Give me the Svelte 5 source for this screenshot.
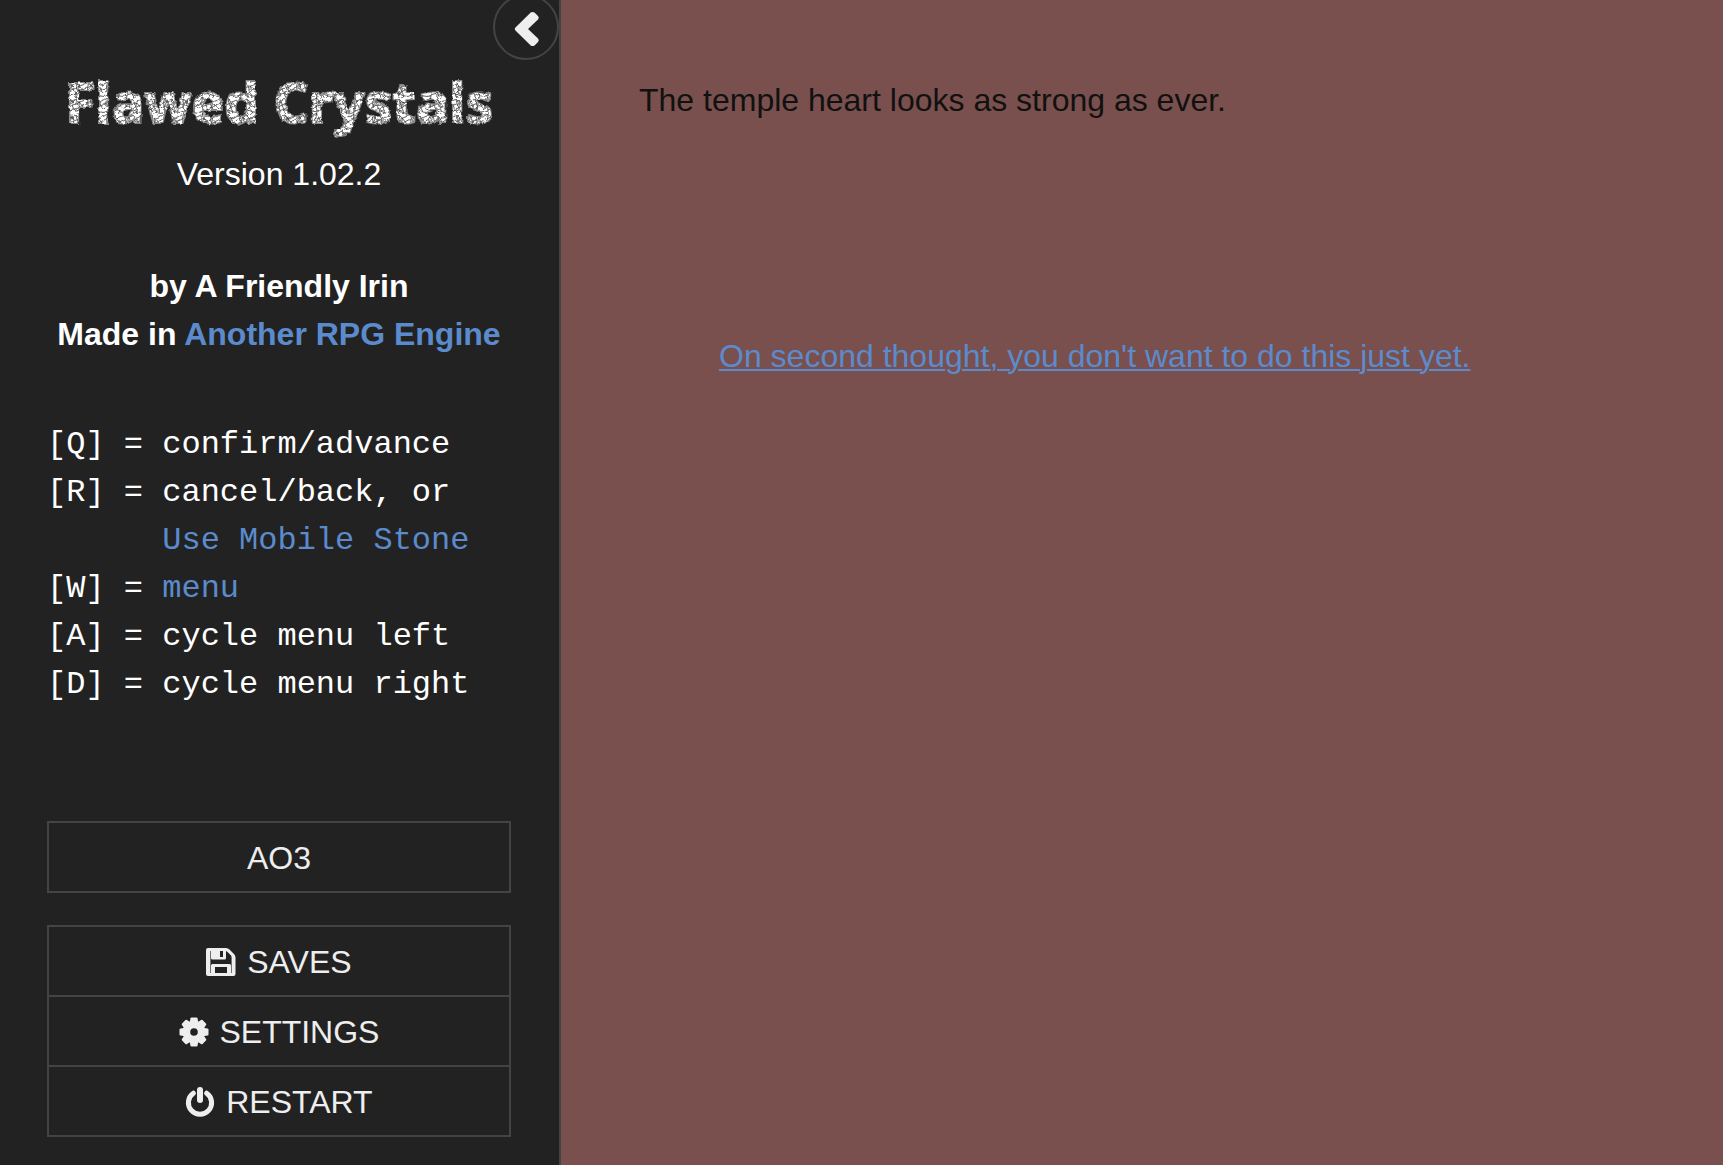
<script>
	const keys = [
		{ key: "Q", text: "confirm/advance" },
		{ key: "R", text: "cancel/back, or", extra: "Use Mobile Stone" },
		{ key: "W", link: "menu" },
		{ key: "A", text: "cycle menu left" },
		{ key: "D", text: "cycle menu right" },
	];

	const core = ["saves", "settings", "restart"];

	let stowed = $state(false);
</script>

<div class="page">
	<aside class="ui-bar" class:stowed>
		<button class="toggle" aria-label="Toggle the UI bar" onclick={() => (stowed = !stowed)}>
			<svg viewBox="0 0 26 36" width="26" height="36">
				<path d="M20.500 1.600 24 5Q25.600 6.700 24 8.400L14 18 24 27.600Q25.600 29.300 24 31L20.500 34.400Q18.500 35.800 16.700 34.400L1.200 19.200Q.200 18 1.200 16.800L16.700 1.600Q18.500.200 20.500 1.600Z" />
			</svg>
		</button>

		<header>
			<h1>Flawed Crystals</h1>
			<p class="version">Version 1.02.2</p>
			<p class="author">
				by A Friendly Irin<br />
				Made in <a href="#engine">Another RPG Engine</a>
			</p>
		</header>

		<div class="keys">
			{#each keys as k}
				<div class="key-row">
					<span>[{k.key}] =</span>
					<span>{#if k.link}<a href="#menu">{k.link}</a>{:else}{k.text}{/if}{#if k.extra}<br /><a href="#stone">{k.extra}</a>{/if}</span>
				</div>
			{/each}
		</div>

		<nav>
			<ul>
				<li><a href="#ao3">AO3</a></li>
			</ul>
			<ul>
				{#each core as item}
					<li>
						<button>
							<svg class="icon" viewBox="0 0 30 30" width="30" height="30" aria-hidden="true">
								{#if item == "saves"}
									<path fill-rule="evenodd" d="M2 1H20Q22 1 23.500 2.500L28 7Q29.500 8.500 29.500 10.500V27Q29.500 29 27.500 29H2Q0 29 0 27V3Q0 1 2 1ZM4.400 4V26H5V18.500Q5 17 6.500 17H23.500Q25 17 25 18.500V26H25.600V10.500Q25.600 9.500 25 8.500L21.500 5Q21 4.500 20 4V11Q20 12.500 18.500 12.500H6.500Q5 12.500 5 11V4ZM14 4V10H17V4ZM9 20V26H21V20Z" />
								{:else if item == "settings"}
									<g transform="translate(15 15)">
										<path fill-rule="evenodd" d="M0-11.200A11.200 11.200 0 1 1 0 11.200A11.200 11.200 0 1 1 0-11.200ZM0-3.800A3.800 3.800 0 1 0 0 3.800A3.800 3.800 0 1 0 0-3.800Z" />
										{#each [0, 45, 90, 135, 180, 225, 270, 315] as angle}
											<path d="M-4.300-9 -3.600-13.500Q-3.400-14.500-2.400-14.500H2.400Q3.400-14.500 3.600-13.500L4.300-9Z" transform="rotate({angle})" />
										{/each}
									</g>
								{:else}
									<path class="ring" d="M8.300 6.200A11.600 11.600 0 1 0 21.700 6.200" />
									<path class="bar" d="M15 3V13" />
								{/if}
							</svg>
							{item}
						</button>
					</li>
				{/each}
			</ul>
		</nav>
	</aside>

	<main>
		<p>The temple heart looks as strong as ever.</p>
		<blockquote>
			<a href="#back">On second thought, you don't want to do this just yet.</a>
		</blockquote>
	</main>
</div>

<!-- chips the edges of the title letters -->
<svg class="defs" width="0" height="0" aria-hidden="true">
	<filter id="chipped">
		<feMorphology in="SourceAlpha" operator="dilate" radius="1" result="fat" />
		<feFlood flood-color="#888" />
		<feComposite in2="fat" operator="in" result="edge" />
		<feMerge result="letters">
			<feMergeNode in="edge" />
			<feMergeNode in="SourceGraphic" />
		</feMerge>
		<feTurbulence type="fractalNoise" baseFrequency="0.2" numOctaves="2" seed="4" result="noise" />
		<feDisplacementMap in="letters" in2="noise" scale="4" xChannelSelector="R" yChannelSelector="G" />
	</filter>
</svg>

<style>
	:global(body) {
		margin: 0;
		background: #79504d;
	}
	.page {
		display: flex;
		min-height: 100vh;
		font-family: "Liberation Sans", Arial, sans-serif;
		font-size: 32px;
		line-height: 48px;
		color: #fff;
	}
	.ui-bar {
		position: relative;
		box-sizing: border-box;
		flex: none;
		width: 561px;
		padding: 66px 48px 28px 47px;
		background: #222;
		border-right: 2px solid #444;
		overflow: hidden;
	}
	.ui-bar.stowed {
		margin-left: -490px;
	}
	a {
		color: #5b8bcd;
		text-decoration: none;
	}
	.toggle {
		position: absolute;
		top: -6px;
		right: 0;
		display: flex;
		align-items: center;
		justify-content: center;
		width: 66px;
		height: 66px;
		padding: 3px 0 0 2px;
		background: #222;
		border: 2px solid #444;
		border-radius: 50%;
		cursor: pointer;
	}
	svg {
		fill: #eee;
	}
	header {
		text-align: center;
	}
	h1 {
		margin: 0;
		font-family: "Noto Sans", "Open Sans", sans-serif;
		font-size: 55px;
		font-weight: bold;
		line-height: 72px;
		white-space: nowrap;
		color: transparent;
		background: #fff url("data:image/svg+xml,%3Csvg xmlns='http://www.w3.org/2000/svg' width='19' height='16' viewBox='0 0 37 31' preserveAspectRatio='none'%3E%3Cpath d='M0 4 7 0 12 6 19 2 26 8 37 4M0 12 5 9 12 6 14 14 22 11 26 8 31 15 37 12M0 21 6 17 14 14 17 22 25 19 31 15 37 21M0 28 8 25 17 22 22 31M25 19 29 27 37 28M7 0 5 9 6 17 8 25 7 31M19 2 22 11 25 19M29 27 26 31M12 6 6 17M26 8 25 19M17 22 29 27' fill='none' stroke='%23333' stroke-width='1.500'/%3E%3C/svg%3E");
		background-clip: text;
		-webkit-background-clip: text;
		filter: url(#chipped);
	}
	p {
		margin: 0;
	}
	.version {
		margin-top: 12px;
	}
	.author {
		margin-top: 64px;
		font-weight: bold;
		white-space: nowrap;
	}
	.keys {
		margin-top: 63px;
		font-family: "Liberation Mono", "Courier New", monospace;
		white-space: nowrap;
	}
	.key-row {
		display: flex;
		gap: 1ch;
	}
	nav {
		margin-top: 112px;
	}
	ul {
		margin: 0 0 32px;
		padding: 0;
		list-style: none;
		border: 2px solid #444;
	}
	ul:last-child {
		margin-bottom: 0;
	}
	li + li {
		border-top: 2px solid #444;
	}
	li a,
	li button {
		display: block;
		box-sizing: border-box;
		width: 100%;
		padding: 11px 0 9px;
		background: none;
		border: 0;
		font: inherit;
		color: #eee;
		text-align: center;
		text-transform: uppercase;
		cursor: pointer;
	}
	li a:hover,
	li button:hover {
		background: #333;
	}
	.icon {
		margin-right: 2px;
		vertical-align: -4px;
	}
	.ring,
	.bar {
		fill: none;
		stroke: #eee;
		stroke-width: 6;
		stroke-linecap: round;
	}
	.ring {
		stroke-width: 5;
	}
	main {
		flex: 1;
		padding: 76px 78px;
		color: #111;
	}
	blockquote {
		margin: 208px 80px 0;
	}
	blockquote a {
		text-decoration: underline;
		text-decoration-thickness: 2px;
		text-underline-offset: 2px;
	}
	.defs {
		position: absolute;
	}
</style>
